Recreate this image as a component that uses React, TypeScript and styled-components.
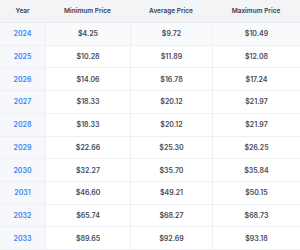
import styled, { createGlobalStyle } from 'styled-components'

const rows = [
  { year: '2024', min: '$4.25', avg: '$9.72', max: '$10.49' },
  { year: '2025', min: '$10.28', avg: '$11.89', max: '$12.08' },
  { year: '2026', min: '$14.06', avg: '$16.78', max: '$17.24' },
  { year: '2027', min: '$18.33', avg: '$20.12', max: '$21.97' },
  { year: '2028', min: '$18.33', avg: '$20.12', max: '$21.97' },
  { year: '2029', min: '$22.66', avg: '$25.30', max: '$26.25' },
  { year: '2030', min: '$32.27', avg: '$35.70', max: '$35.84' },
  { year: '2031', min: '$46.60', avg: '$49.21', max: '$50.15' },
  { year: '2032', min: '$65.74', avg: '$68.27', max: '$68.73' },
  { year: '2033', min: '$89.65', avg: '$92.69', max: '$93.18' }
]

export default function App() {
  return (
    <>
      <GlobalStyle />
      <Table>
        <HeadCell>Year</HeadCell>
        <HeadCell>Minimum Price</HeadCell>
        <HeadCell>Average Price</HeadCell>
        <HeadCell>Maximum Price</HeadCell>
        {rows.map((row, index) => (
          <Row key={row.year} $highlight={index === 0}>
            <YearCell>{row.year}</YearCell>
            <Cell>{row.min}</Cell>
            <Cell>{row.avg}</Cell>
            <Cell>{row.max}</Cell>
          </Row>
        ))}
      </Table>
    </>
  )
}

const GlobalStyle = createGlobalStyle`
  * {
    box-sizing: border-box;
  }

  body {
    margin: 0;
    background: #ffffff;
    font-family: Inter, "Noto Sans", sans-serif;
  }
`

const Table = styled.div`
  width: 300px;
  height: 250px;
  display: grid;
  grid-template-columns: 45px 85px 82px 88px;
  grid-template-rows: 23px repeat(10, 1fr);
  overflow: hidden;
`

const HeadCell = styled.div`
  display: flex;
  align-items: center;
  justify-content: center;
  background: #f3f4f6;
  color: #3a404c;
  font-size: 6.5px;
  font-weight: 600;
  border-bottom: 1px solid #e9ebef;
  white-space: nowrap;
`

const Row = styled.div<{ $highlight: boolean }>`
  display: contents;

  & > div {
    background: ${(p) => (p.$highlight ? '#f9fafc' : '#ffffff')};
  }
`

const Cell = styled.div`
  display: flex;
  align-items: center;
  justify-content: center;
  color: #454a56;
  font-size: 7px;
  font-weight: 600;
  border-bottom: 1px solid #eef0f3;
  border-left: 1px solid #eef0f3;
`

const YearCell = styled(Cell)`
  color: #3b82f6;
  border-left: none;

  && {
    background: #f6f8fb;
  }
`
